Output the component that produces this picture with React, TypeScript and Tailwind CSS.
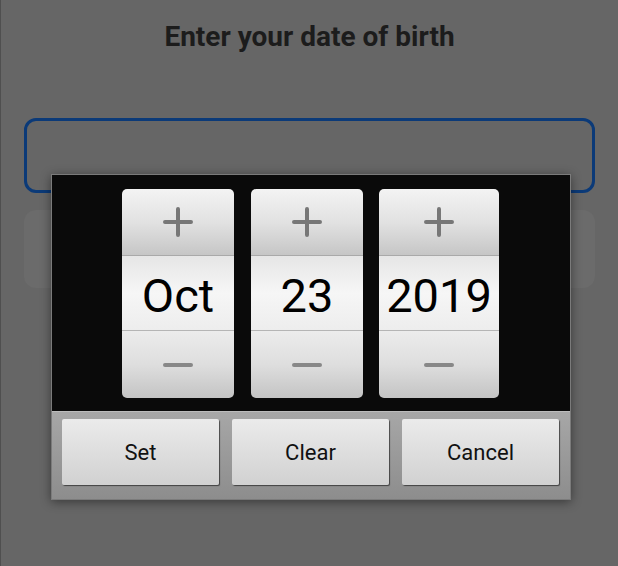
import React from 'react';

const PlusIcon: React.FC = () => (
  <svg width="30" height="30" viewBox="0 0 30 30">
    <path d="M2 15H28M15 2V28" stroke="#777" strokeWidth="4" strokeLinecap="round" />
  </svg>
);

const MinusIcon: React.FC = () => (
  <svg width="30" height="8" viewBox="0 0 30 8">
    <path d="M2 4H28" stroke="#888" strokeWidth="4" strokeLinecap="round" />
  </svg>
);

interface SpinnerProps {
  value: string;
  wide?: boolean;
}

const Spinner: React.FC<SpinnerProps> = ({ value, wide }) => (
  <div className={`${wide ? 'w-[120px]' : 'w-[112px]'} h-[209px] flex flex-col rounded-[5px] overflow-hidden`}>
    <div className="h-[67px] flex items-center justify-center bg-linear-to-b from-[#f3f3f3] via-[#e2e2e2] to-[#c6c6c6] border-b border-[#a9a9a9]">
      <PlusIcon />
    </div>
    <div className="h-[75px] pt-[5px] flex items-center justify-center bg-linear-to-b from-[#e6e6e6] via-[#f6f6f6] to-[#ededed] border-b border-[#b5b5b5]">
      <span className="text-[47px] leading-none text-black">{value}</span>
    </div>
    <div className="flex-1 flex items-center justify-center bg-linear-to-b from-[#ececec] via-[#dedede] to-[#c4c4c4]">
      <MinusIcon />
    </div>
  </div>
);

const DialogButton: React.FC<{ label: string }> = ({ label }) => (
  <button className="w-[157px] h-[66px] rounded-[2px] bg-linear-to-b from-[#ebebeb] to-[#d1d1d1] shadow-[1px_1px_1px_rgba(0,0,0,0.55)] text-[22px] text-[#111]">
    {label}
  </button>
);

const App: React.FC = () => {
  return (
    <div className="relative h-[566px] w-full overflow-hidden bg-[#666666] border-l border-[#4f4f4f] font-['Roboto',sans-serif]">
      <h1 className="pt-[20px] text-center text-[28px] leading-[34px] font-bold text-[#1c1c1c]">
        Enter your date of birth
      </h1>

      <div className="mx-[23px] mt-[64px] h-[75px] rounded-[12px] border-[3px] border-[#0b3a78]" />
      <div className="mx-[23px] mt-[17px] h-[78px] rounded-[12px] bg-[#6b6b6b]" />

      <div className="absolute left-[50px] top-[174px] w-[520px] border border-[#7b7b7b] shadow-[0_2px_10px_rgba(0,0,0,0.45)]">
        <div className="h-[236px] bg-[#0a0a0a] pt-[14px] pl-[70px] flex gap-[17px]">
          <Spinner value="Oct" />
          <Spinner value="23" />
          <div className="-ml-px">
            <Spinner value="2019" wide />
          </div>
        </div>
        <div className="h-[88px] bg-linear-to-b from-[#a7a7a7] to-[#8d8d8d] border-t border-[#bcbcbc] px-[10px] pt-[7px] flex gap-[13px]">
          <DialogButton label="Set" />
          <DialogButton label="Clear" />
          <DialogButton label="Cancel" />
        </div>
      </div>
    </div>
  );
};

export default App;
